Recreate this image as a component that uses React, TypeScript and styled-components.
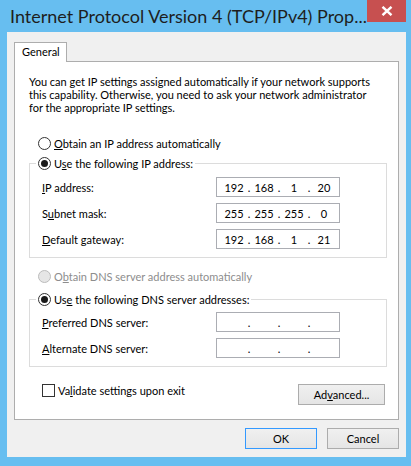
import React from 'react';
import styled, { createGlobalStyle } from 'styled-components';

const GlobalStyle = createGlobalStyle`
  html, body {
    margin: 0;
    padding: 0;
  }
  body {
    font-family: Lato, "Noto Sans", sans-serif;
    font-size: 11px;
    color: #000000;
  }
`;

const U = styled.u`
  text-decoration: underline;
  text-underline-offset: 1px;
`;

type IpRow = { label: React.ReactNode; value: string[] };

const ipRows: IpRow[] = [
  { label: <><U>I</U>P address:</>, value: ['192', '168', '1', '20'] },
  { label: <>S<U>u</U>bnet mask:</>, value: ['255', '255', '255', '0'] },
  { label: <><U>D</U>efault gateway:</>, value: ['192', '168', '1', '21'] },
];

const dnsRows: IpRow[] = [
  { label: <><U>P</U>referred DNS server:</>, value: ['', '', '', ''] },
  { label: <><U>A</U>lternate DNS server:</>, value: ['', '', '', ''] },
];

function IpBox({ value }: { value: string[] }) {
  return (
    <IpInput>
      {value.map((v, i) => (
        <React.Fragment key={i}>
          {i > 0 && <IpDot>.</IpDot>}
          <IpCell>{v}</IpCell>
        </React.Fragment>
      ))}
    </IpInput>
  );
}

function Radio({ checked, disabled }: { checked?: boolean; disabled?: boolean }) {
  return (
    <RadioCircle $disabled={disabled}>{checked && <RadioDot />}</RadioCircle>
  );
}

export default function App() {
  return (
    <>
      <GlobalStyle />
      <Window>
        <TitleBar>
          <Title>Internet Protocol Version 4 (TCP/IPv4) Prop...</Title>
          <CloseButton>
            <svg width="12" height="10" viewBox="0 0 12 10">
              <path d="M1.5 0.8 L10.5 9.2 M10.5 0.8 L1.5 9.2" stroke="#ffffff" strokeWidth="2.4" />
            </svg>
          </CloseButton>
        </TitleBar>
        <Client>
          <TabStrip>
            <Tab>General</Tab>
          </TabStrip>
          <Panel>
            <Description>
              You can get IP settings assigned automatically if your network supports
              <br />
              this capability. Otherwise, you need to ask your network administrator
              <br />
              for the appropriate IP settings.
            </Description>

            <RadioRow $top={22}>
              <Radio />
              <RadioLabel><U>O</U>btain an IP address automatically</RadioLabel>
            </RadioRow>

            <Group $top={6} $padTop={7}>
              <Legend>
                <Radio checked />
                <RadioLabel>U<U>s</U>e the following IP address:</RadioLabel>
              </Legend>
              <FieldGrid>
                {ipRows.map((r, i) => (
                  <React.Fragment key={i}>
                    <FieldLabel>{r.label}</FieldLabel>
                    <IpBox value={r.value} />
                  </React.Fragment>
                ))}
              </FieldGrid>
            </Group>

            <RadioRow $top={11}>
              <Radio disabled />
              <RadioLabel $disabled>O<U>b</U>tain DNS server address automatically</RadioLabel>
            </RadioRow>

            <Group $top={9} $padTop={6}>
              <Legend>
                <Radio checked />
                <RadioLabel>Us<U>e</U> the following DNS server addresses:</RadioLabel>
              </Legend>
              <FieldGrid>
                {dnsRows.map((r, i) => (
                  <React.Fragment key={i}>
                    <FieldLabel>{r.label}</FieldLabel>
                    <IpBox value={r.value} />
                  </React.Fragment>
                ))}
              </FieldGrid>
            </Group>

            <PanelFooter>
              <CheckRow>
                <CheckBox />
                <span>Va<U>l</U>idate settings upon exit</span>
              </CheckRow>
              <Button $width={87}>Ad<U>v</U>anced...</Button>
            </PanelFooter>
          </Panel>
          <DialogButtons>
            <Button $width={72} $default>OK</Button>
            <Button $width={72}>Cancel</Button>
          </DialogButtons>
        </Client>
      </Window>
    </>
  );
}

const Window = styled.div`
  width: 411px;
  height: 466px;
  box-sizing: border-box;
  background: #67bef0;
  padding: 0 5px 9px 7px;
  display: flex;
  flex-direction: column;
`;

const TitleBar = styled.div`
  height: 32px;
  display: flex;
  justify-content: space-between;
  align-items: flex-start;
  flex-shrink: 0;
`;

const Title = styled.div`
  font-size: 18px;
  line-height: 22px;
  padding-top: 5px;
  margin-left: 3px;
  color: #1e1e1e;
  white-space: nowrap;
`;

const CloseButton = styled.div`
  width: 39px;
  height: 22px;
  background: #c75050;
  display: flex;
  align-items: center;
  justify-content: center;
`;

const Client = styled.div`
  flex: 1;
  background: #f0f0f0;
  padding: 10px 7px 0 7px;
  display: flex;
  flex-direction: column;
`;

const TabStrip = styled.div`
  display: flex;
`;

const Tab = styled.div`
  position: relative;
  z-index: 1;
  width: 53px;
  height: 20px;
  box-sizing: border-box;
  margin-bottom: -1px;
  padding-left: 7px;
  border: 1px solid #adadad;
  border-bottom: none;
  background: #ffffff;
  line-height: 18px;
`;

const Panel = styled.div`
  height: 359px;
  box-sizing: border-box;
  border: 1px solid #adadad;
  background: #ffffff;
  padding: 13px 11px 0 14px;
  display: flex;
  flex-direction: column;
`;

const Description = styled.p`
  margin: 0;
  line-height: 13px;
  white-space: nowrap;
`;

const RadioRow = styled.div<{ $top: number }>`
  margin-top: ${(p) => p.$top}px;
  margin-left: 9px;
  height: 14px;
  display: flex;
  align-items: center;
`;

const RadioCircle = styled.span<{ $disabled?: boolean }>`
  width: 13px;
  height: 13px;
  box-sizing: border-box;
  border-radius: 50%;
  border: 1px solid ${(p) => (p.$disabled ? '#bcbcbc' : '#333333')};
  background: ${(p) => (p.$disabled ? '#e6e6e6' : '#ffffff')};
  display: flex;
  align-items: center;
  justify-content: center;
  flex-shrink: 0;
`;

const RadioDot = styled.span`
  width: 7px;
  height: 7px;
  border-radius: 50%;
  background: #1a1a1a;
`;

const RadioLabel = styled.span<{ $disabled?: boolean }>`
  margin-left: 3px;
  color: ${(p) => (p.$disabled ? '#8d8d8d' : '#000000')};
  white-space: nowrap;
`;

const Group = styled.fieldset<{ $top: number; $padTop: number }>`
  margin: ${(p) => p.$top}px 0 0 0;
  padding: ${(p) => p.$padTop}px 46px 8px 12px;
  border: 1px solid #dcdcdc;
  min-inline-size: 0;
`;

const Legend = styled.legend`
  margin-left: -6px;
  padding: 0 2px;
  height: 14px;
  display: flex;
  align-items: center;
`;

const FieldGrid = styled.div`
  display: grid;
  grid-template-columns: 1fr 124px;
  grid-auto-rows: 20px;
  row-gap: 6px;
  align-items: center;
`;

const FieldLabel = styled.span`
  white-space: nowrap;
`;

const IpInput = styled.div`
  height: 20px;
  box-sizing: border-box;
  border: 1px solid #abadb3;
  background: #ffffff;
  display: grid;
  grid-template-columns: 26px 4px 26px 4px 26px 4px 26px;
  padding-left: 4px;
  align-items: center;
`;

const IpCell = styled.span`
  text-align: center;
`;

const IpDot = styled.span`
  text-align: center;
`;

const PanelFooter = styled.div`
  margin-top: 17px;
  padding: 0 2px 0 13px;
  display: flex;
  justify-content: space-between;
  align-items: flex-start;
`;

const CheckRow = styled.div`
  height: 13px;
  display: flex;
  align-items: center;
  gap: 3px;
  white-space: nowrap;
`;

const CheckBox = styled.span`
  width: 13px;
  height: 13px;
  box-sizing: border-box;
  border: 1px solid #333333;
  background: #ffffff;
`;

const Button = styled.div<{ $width: number; $default?: boolean }>`
  width: ${(p) => p.$width}px;
  height: 21px;
  box-sizing: border-box;
  border: 1px solid ${(p) => (p.$default ? '#3399ff' : '#acacac')};
  background: linear-gradient(#f0f0f0, #e5e5e5);
  display: flex;
  align-items: center;
  justify-content: center;
`;

const DialogButtons = styled.div`
  margin-top: 8px;
  display: flex;
  justify-content: flex-end;
  gap: 10px;
`;
